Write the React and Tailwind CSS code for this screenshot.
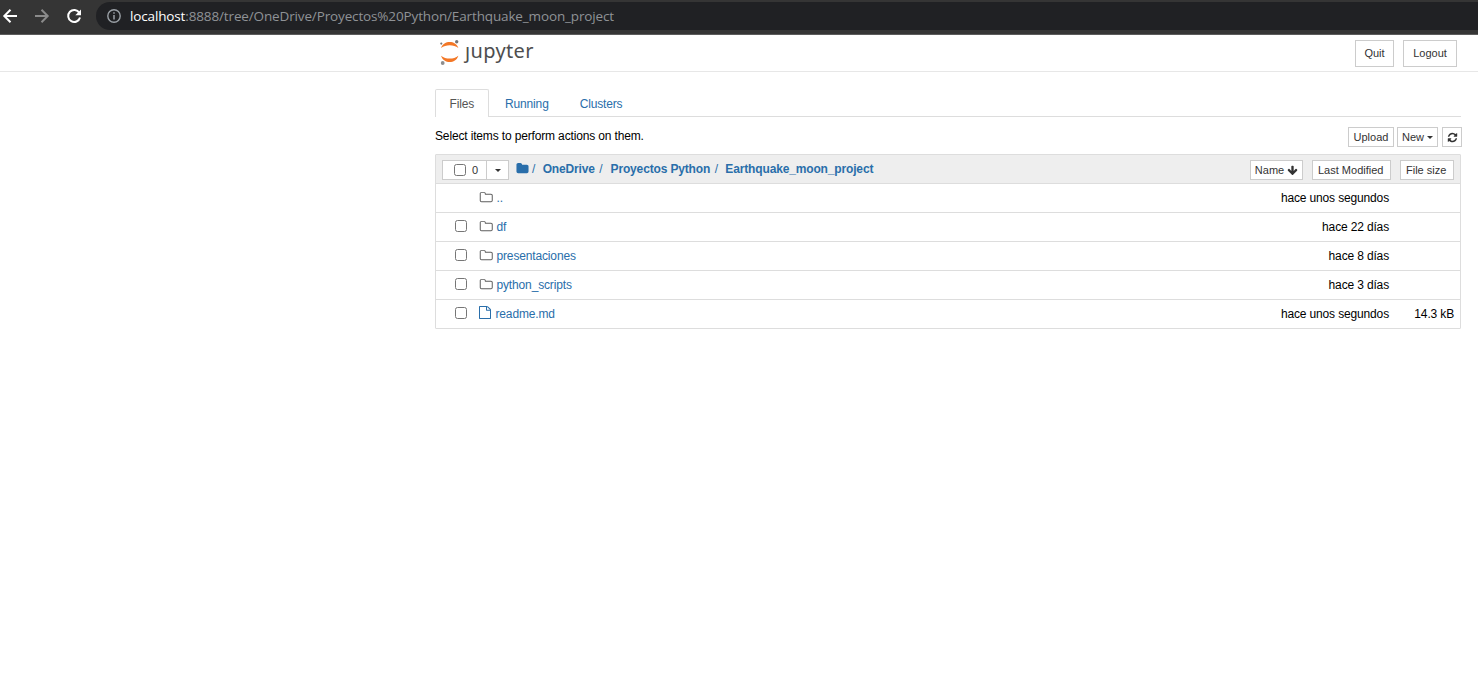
import React from "react";

const FOLDER_O =
  "M1632 1312v-704q0-40-28-68t-68-28h-704q-40 0-68-28t-28-68v-64q0-40-28-68t-68-28h-320q-40 0-68 28t-28 68v960q0 40 28 68t68 28h1216q40 0 68-28t28-68zm128-704v704q0 92-66 158t-158 66h-1216q-92 0-158-66t-66-158v-960q0-92 66-158t158-66h320q92 0 158 66t66 158v32h672q92 0 158 66t66 158z";
const FILE_O =
  "M1596 380q28 28 48 76t20 88v1152q0 40-28 68t-68 28h-1344q-40 0-68-28t-28-68v-1600q0-40 28-68t68-28h896q40 0 88 20t76 48zm-444-244v376h376q-10-29-22-41l-313-313q-12-12-41-22zm384 1528v-1024h-416q-40 0-68-28t-28-68v-416h-768v1536h1280z";
const FOLDER =
  "M1728 608v704q0 92-66 158t-158 66h-1216q-92 0-158-66t-66-158v-960q0-92 66-158t158-66h320q92 0 158 66t66 158v32h672q92 0 158 66t66 158z";
const REFRESH =
  "M1639 1056q0 5-1 7-64 268-268 434.5t-478 166.5q-146 0-282.5-55t-243.5-157l-129 129q-19 19-45 19t-45-19-19-45v-448q0-26 19-45t45-19h448q26 0 45 19t19 45-19 45l-137 137q71 66 161 102t187 36q134 0 250-65t186-179q11-17 53-117 8-23 30-23h192q13 0 22.5 9.5t9.5 22.5zm25-800v448q0 26-19 45t-45 19h-448q-26 0-45-19t-19-45 19-45l138-138q-148-137-349-137-134 0-250 65t-186 179q-11 17-53 117-8 23-30 23h-199q-13 0-22.5-9.5t-9.5-22.5v-7q65-268 270-434.5t480-166.5q146 0 284 55.5t245 156.5l130-129q19-19 45-19t45 19 19 45z";
const ARROW_DOWN =
  "M1675 832q0 53-37 90l-651 652q-39 37-91 37-53 0-90-37l-651-652q-38-36-38-90 0-53 38-91l74-75q39-37 91-37 53 0 90 37l294 294v-704q0-52 38-90t90-38h128q52 0 90 38t38 90v704l294-294q37-37 90-37 52 0 91 37l75 75q37 39 37 91z";

function Icon({ d, className }) {
  return (
    <svg viewBox="0 0 1792 1792" preserveAspectRatio="none" fill="currentColor" className={"shrink-0 " + className}>
      <path d={d} />
    </svg>
  );
}

function Caret() {
  return (
    <svg viewBox="0 0 6 3" className="h-[3px] w-[6px] shrink-0" fill="currentColor">
      <path d="M0 0h6L3 3z" />
    </svg>
  );
}

function Box() {
  return <span className="block size-3 shrink-0 rounded-[2.5px] border border-[#767676] bg-white" />;
}

function Btn({ className, children }) {
  return (
    <button
      className={
        "flex shrink-0 items-center whitespace-nowrap border border-[#ccc] bg-white text-[11px] leading-none tracking-normal text-[#333] " +
        className
      }
    >
      {children}
    </button>
  );
}

function BrowserBar() {
  return (
    <div className="flex h-[35px] items-start border-b border-[#5c5c5c] bg-[#353535] pt-[2px]">
      <div className="flex h-7 w-24 shrink-0 items-center">
        <svg viewBox="0 0 96 28" className="h-7 w-24" fill="none" strokeWidth="2">
          <path d="M17 14H4.500M10.500 7.800L4.300 14l6.200 6.200" stroke="#fff" />
          <path d="M35 14h12.500M41.500 7.800L47.700 14l-6.200 6.200" stroke="#8b8b8b" />
          <path d="M79.300 10.800A6 6 0 1 0 80 15.500" stroke="#fff" />
          <path d="M81 7.500v5.700h-5.700z" fill="#fff" />
        </svg>
      </div>
      <div className="flex h-7 flex-1 items-center rounded-l-full bg-[#202124] pl-[11px]">
        <svg viewBox="0 0 14 14" className="size-[14px] shrink-0" fill="none" stroke="#9aa0a6">
          <circle cx="7" cy="7" r="6.200" strokeWidth="1.400" />
          <path d="M7 6v4.500M7 3.300v1.500" strokeWidth="1.500" />
        </svg>
        <span className="ml-[9px] mt-[2px] whitespace-nowrap font-['Open_Sans',sans-serif] text-[13.500px] leading-none tracking-[-0.14px] text-[#8f9296]">
          <span className="text-white">localhost</span>
          :8888/tree/OneDrive/Proyectos%20Python/Earthquake_moon_project
        </span>
      </div>
    </div>
  );
}

function Logo() {
  return (
    <div className="flex h-7 items-start">
      <svg viewBox="0 0 20 28" className="h-7 w-5 shrink-0">
        <path d="M1 11C2.600 6.700 6 4.900 9.700 4.900s7.100 1.800 8.700 6.100C15.800 9.100 13 8.300 9.700 8.300S3.600 9.100 1 11z" fill="#f37726" />
        <path d="M1 18.700c1.600 4.500 5 6.300 8.700 6.300s7.100-1.800 8.700-6.300c-2.600 2-5.400 2.900-8.700 2.900s-6.100-.9-8.700-2.900z" fill="#f37726" />
        <circle cx="16.700" cy="4.700" r="1.700" fill="#767677" />
        <circle cx="1.300" cy="6.600" r="1.100" fill="#767677" />
        <circle cx="2.700" cy="26" r="1.900" fill="#8e8e8e" />
      </svg>
      <span className="ml-[5px] font-['Noto_Sans',sans-serif] text-[20px] leading-[28px] tracking-[0.350px] text-[#4e4e4e]">
        ȷupyter
      </span>
    </div>
  );
}

const rows = [
  { name: "..", time: "hace unos segundos", up: true },
  { name: "df", time: "hace 22 días" },
  { name: "presentaciones", time: "hace 8 días" },
  { name: "python_scripts", time: "hace 3 días" },
  { name: "readme.md", time: "hace unos segundos", size: "14.3 kB", file: true },
];

function Row({ row }) {
  return (
    <div className="flex h-[29px] items-center border-t border-[#ddd] pl-[19px] pr-[6px]">
      <div className="w-6 shrink-0 pb-[2px]">{!row.up && <Box />}</div>
      {row.file ? (
        <Icon d={FILE_O} className="mb-[3px] ml-[-1px] mr-[3.500px] h-[13px] w-[14px] text-[#296eaa]" />
      ) : (
        <Icon d={FOLDER_O} className="mb-px ml-[-0.500px] mr-[4px] h-[13px] w-[14px] text-[#5e5e5e]" />
      )}
      <a className="flex-1 text-[#296eaa]">{row.name}</a>
      <span>{row.time}</span>
      <span className="w-[65px] text-right">{row.size}</span>
    </div>
  );
}

export default function App() {
  return (
    <div className="h-[674px] w-[1478px] overflow-hidden bg-white font-['Liberation_Sans',Arial,sans-serif] text-[12px] leading-[17px] tracking-[-0.150px] text-black">
      <BrowserBar />
      <header className="flex h-[37px] items-start border-b border-[#e7e7e7] pl-[440px] pr-[21px]">
        <div className="flex-1 pt-[2px]">
          <Logo />
        </div>
        <div className="flex gap-[9px] pt-[5px]">
          <Btn className="h-[27px] w-[39px] justify-center">Quit</Btn>
          <Btn className="h-[27px] w-[54px] justify-center">Logout</Btn>
        </div>
      </header>

      <main className="ml-[435px] w-[1026px] pt-[17px]">
        <nav className="flex h-7 border-b border-[#ddd] text-[#296eaa]">
          <a className="-mb-px h-7 w-[54px] rounded-t-[2px] border border-b-0 border-[#ddd] bg-white pl-[13.500px] pt-[6px] text-[#555]">
            Files
          </a>
          <a className="pl-4 pt-[7px]">Running</a>
          <a className="pl-[31px] pt-[7px]">Clusters</a>
        </nav>

        <div className="-mr-px flex h-[37px] pt-[10px]">
          <span className="flex-1 pt-px">Select items to perform actions on them.</span>
          <Btn className="h-5 w-[46px] justify-center">Upload</Btn>
          <Btn className="ml-[3px] h-5 w-[41px] justify-center gap-[3px]">
            New <Caret />
          </Btn>
          <Btn className="ml-1 h-5 w-5 justify-center">
            <Icon d={REFRESH} className="size-[11px]" />
          </Btn>
        </div>

        <section className="rounded-[1px] border border-[#ddd]">
          <div className="flex h-7 bg-[#eee] pl-[6px] pr-[6px] pt-[5px]">
            <Btn className="h-5 w-[45px] pl-[11px]">
              <Box />
              <span className="ml-[6px]">0</span>
            </Btn>
            <Btn className="-ml-px h-5 w-[23px] justify-center">
              <Caret />
            </Btn>
            <div className="flex flex-1 pt-px font-bold text-[#296eaa]">
              <Icon d={FOLDER} className="ml-[7px] mt-px h-[13px] w-[13px]" />
              <span className="ml-[3px] font-normal">/</span>
              <a className="ml-[7.500px]">OneDrive</a>
              <span className="ml-[4.500px] font-normal">/</span>
              <a className="ml-[8px]">Proyectos Python</a>
              <span className="ml-[4.500px] font-normal">/</span>
              <a className="ml-[7.500px]">Earthquake_moon_project</a>
            </div>
            <Btn className="h-5 w-[53px] justify-center gap-[3px]">
              Name <Icon d={ARROW_DOWN} className="size-[11px]" />
            </Btn>
            <Btn className="ml-[9px] h-5 w-[79px] pl-[5px] tracking-[-0.100px]">Last Modified</Btn>
            <Btn className="ml-[9px] h-5 w-[54px] pl-[5px] tracking-[-0.100px]">File size</Btn>
          </div>
          {rows.map((row) => (
            <Row key={row.name} row={row} />
          ))}
        </section>
      </main>
    </div>
  );
}
